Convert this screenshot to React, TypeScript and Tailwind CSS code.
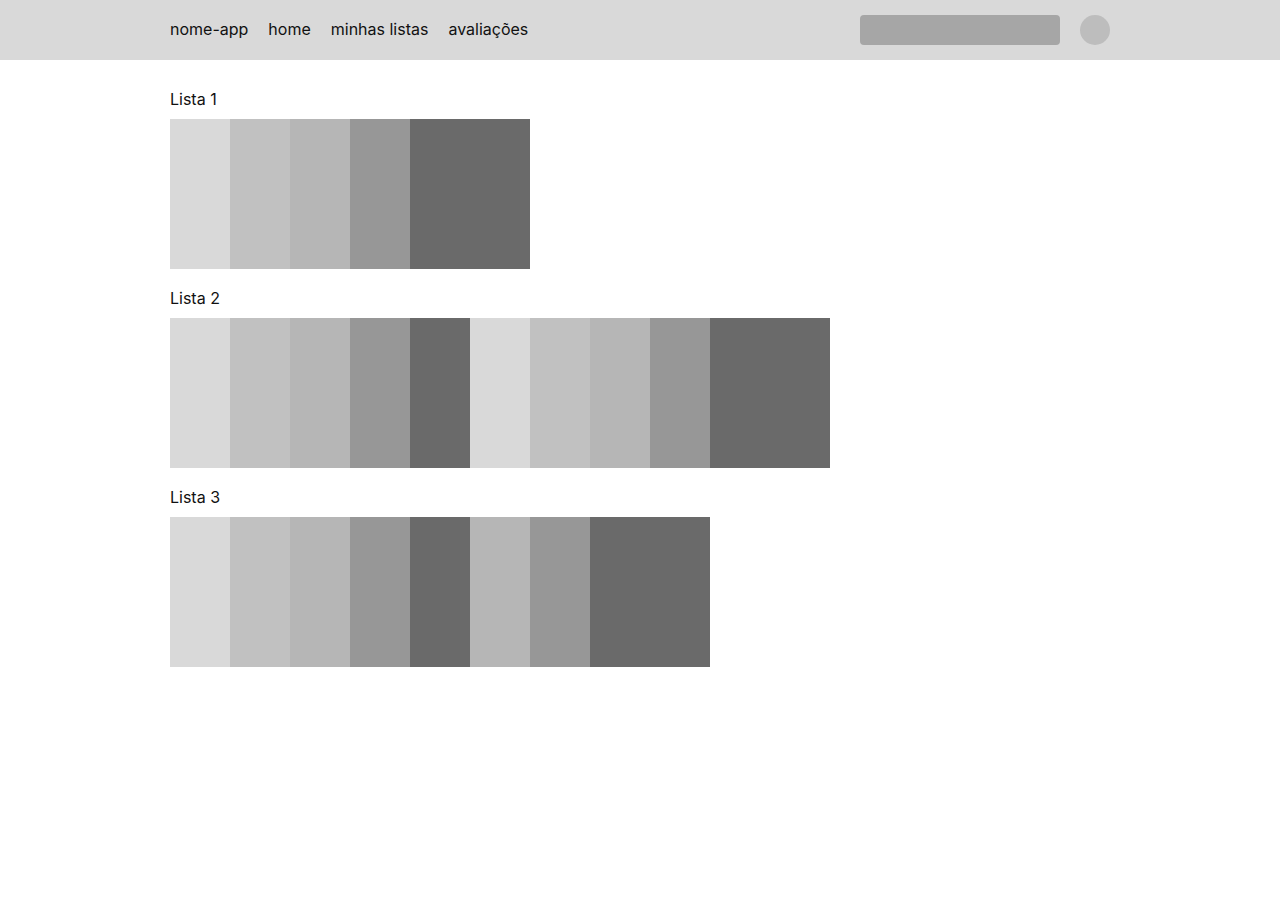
import React from "react";

const C = {
  a: "bg-[#d9d9d9]",
  b: "bg-[#c1c1c1]",
  c: "bg-[#b6b6b6]",
  d: "bg-[#979797]",
  e: "bg-[#6a6a6a]",
};

type Block = { color: string; wide?: boolean };

const lists: { name: string; blocks: Block[] }[] = [
  {
    name: "Lista 1",
    blocks: [
      { color: C.a },
      { color: C.b },
      { color: C.c },
      { color: C.d },
      { color: C.e, wide: true },
    ],
  },
  {
    name: "Lista 2",
    blocks: [
      { color: C.a },
      { color: C.b },
      { color: C.c },
      { color: C.d },
      { color: C.e },
      { color: C.a },
      { color: C.b },
      { color: C.c },
      { color: C.d },
      { color: C.e, wide: true },
    ],
  },
  {
    name: "Lista 3",
    blocks: [
      { color: C.a },
      { color: C.b },
      { color: C.c },
      { color: C.d },
      { color: C.e },
      { color: C.c },
      { color: C.d },
      { color: C.e, wide: true },
    ],
  },
];

export default function App() {
  return (
    <div
      className="min-h-[911px] bg-white text-[#111111]"
      style={{ fontFamily: "Inter, 'Noto Sans', sans-serif" }}
    >
      <header className="h-[60px] bg-[#d9d9d9] px-[170px] flex items-center justify-between">
        <nav className="flex items-center gap-5 text-base leading-[19px] mb-[2px]">
          <span>nome-app</span>
          <span>home</span>
          <span>minhas listas</span>
          <span>avaliações</span>
        </nav>
        <div className="flex items-center gap-5">
          <div className="w-[200px] h-[30px] rounded bg-[#a6a6a6]" />
          <div className="w-[30px] h-[30px] rounded-full bg-[#bdbdbd]" />
        </div>
      </header>
      <main className="px-[170px] pt-[30px] flex flex-col gap-5">
        {lists.map((l) => (
          <section key={l.name} className="flex flex-col gap-[10px]">
            <div className="text-base leading-[19px]">{l.name}</div>
            <div className="flex h-[150px]">
              {l.blocks.map((b, i) => (
                <div
                  key={i}
                  className={`${b.color} ${b.wide ? "w-[120px]" : "w-[60px]"} h-full`}
                />
              ))}
            </div>
          </section>
        ))}
      </main>
    </div>
  );
}
